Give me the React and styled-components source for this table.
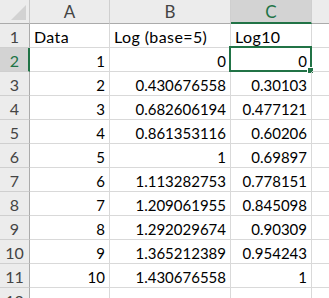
import React from "react";
import styled, { createGlobalStyle, css } from "styled-components";

const Global = createGlobalStyle`
  html, body { margin: 0; padding: 0; background: #fff; overflow: hidden; }
  body { font-family: "Lato", "Liberation Sans", sans-serif; }
`;

const GREEN = "#217346";

const Sheet = styled.div`
  display: grid;
  grid-template-columns: 30px 80px 121px 81px 40px;
  grid-auto-rows: 24px;
  width: 329px;
  height: 298px;
  overflow: hidden;
  font-size: 15px;
  color: #000;
`;

const Corner = styled.div`
  box-sizing: border-box;
  background: #ececec;
  border-right: 1px solid #c8c8c8;
  border-bottom: 1px solid #ababab;
  display: flex;
  justify-content: flex-end;
  align-items: flex-end;
  padding: 0 3px 3px 0;
`;

const ColHead = styled.div`
  box-sizing: border-box;
  background: ${(p) => (p.$active ? "#d3d3d3" : "#ececec")};
  color: ${(p) => (p.$active ? GREEN : "#444")};
  border-right: 1px solid #cfcfcf;
  border-bottom: ${(p) => (p.$active ? `2px solid ${GREEN}` : "1px solid #ababab")};
  display: flex;
  justify-content: center;
  align-items: flex-end;
  line-height: 18px;
  padding-bottom: ${(p) => (p.$active ? "1px" : "2px")};
  font-size: 17px;
`;

const RowHead = styled.div`
  box-sizing: border-box;
  background: ${(p) => (p.$active ? "#d3d3d3" : "#ececec")};
  color: ${(p) => (p.$active ? GREEN : "#444")};
  border-right: ${(p) => (p.$active ? `2px solid ${GREEN}` : "1px solid #ababab")};
  border-bottom: 1px solid #cfcfcf;
  display: flex;
  justify-content: center;
  align-items: flex-end;
  line-height: 18px;
  padding-bottom: 1px;
  padding-left: ${(p) => (p.$active ? "1px" : "0")};
  font-size: 16px;
`;

const Cell = styled.div`
  position: relative;
  box-sizing: border-box;
  border-right: 1px solid #d9d9d9;
  border-bottom: 1px solid #d9d9d9;
  display: flex;
  align-items: flex-end;
  line-height: 18px;
  padding: 0 4px 1px 4px;
  white-space: nowrap;
  ${(p) =>
    p.$num
      ? css`
          justify-content: flex-end;
        `
      : css`
          justify-content: flex-start;
          font-size: 16px;
          letter-spacing: 0.4px;
        `}
`;

const Selection = styled.div`
  position: absolute;
  left: -2px;
  top: -2px;
  right: -1px;
  bottom: -1px;
  border: 2px solid ${GREEN};
  pointer-events: none;
`;

const Handle = styled.div`
  position: absolute;
  right: -4px;
  bottom: -4px;
  width: 5px;
  height: 5px;
  background: ${GREEN};
  border: 1px solid #fff;
`;

const rows = [
  ["Data", "Log (base=5)", "Log10"],
  [1, "0", "0"],
  [2, "0.430676558", "0.30103"],
  [3, "0.682606194", "0.477121"],
  [4, "0.861353116", "0.60206"],
  [5, "1", "0.69897"],
  [6, "1.113282753", "0.778151"],
  [7, "1.209061955", "0.845098"],
  [8, "1.292029674", "0.90309"],
  [9, "1.365212389", "0.954243"],
  [10, "1.430676558", "1"],
];

export default function App() {
  return (
    <>
      <Global />
      <Sheet>
        <Corner>
          <svg width="15" height="15" viewBox="0 0 15 15">
            <polygon points="15,0 15,15 0,15" fill="#d2d2d2" />
          </svg>
        </Corner>
        <ColHead>A</ColHead>
        <ColHead>B</ColHead>
        <ColHead $active>C</ColHead>
        <ColHead />
        {rows.map((r, i) => {
          const header = i === 0;
          const active = i === 1;
          return (
            <React.Fragment key={i}>
              <RowHead $active={active}>{i + 1}</RowHead>
              <Cell $num={!header}>{r[0]}</Cell>
              <Cell $num={!header}>{r[1]}</Cell>
              <Cell $num={!header}>
                {r[2]}
                {active && (
                  <Selection>
                    <Handle />
                  </Selection>
                )}
              </Cell>
              <Cell />
            </React.Fragment>
          );
        })}
        <RowHead>12</RowHead>
        <Cell />
        <Cell />
        <Cell />
        <Cell />
      </Sheet>
    </>
  );
}
